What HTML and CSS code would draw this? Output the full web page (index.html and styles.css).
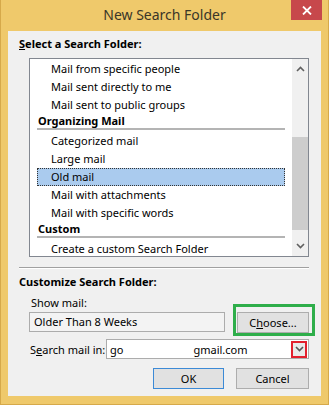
FILE: index.html
```html
<!DOCTYPE html>
<html lang="en">

<head>
    <meta charset="UTF-8">
    <title>New Search Folder</title>
    <link rel="stylesheet" href="styles.css">
</head>

<body>
    <div class="window">
        <header class="titlebar">
            <span></span>
            <h1 class="title">New Search Folder</h1>
            <button class="close" aria-label="Close">
                <svg width="10" height="9" viewBox="0 0 10 9">
                    <path d="M1 0.5 L9 8.5 M9 0.5 L1 8.5" stroke="#fff" stroke-width="1.8" fill="none" />
                </svg>
            </button>
        </header>

        <main class="client">
            <p class="group-label"><u>S</u>elect a Search Folder:</p>

            <div class="listbox">
                <ul class="items">
                    <li class="item">Mail from specific people</li>
                    <li class="item">Mail sent directly to me</li>
                    <li class="item">Mail sent to public groups</li>
                    <li class="header">Organizing Mail</li>
                    <li class="sep"></li>
                    <li class="item">Categorized mail</li>
                    <li class="item">Large mail</li>
                    <li class="item selected">Old mail</li>
                    <li class="item">Mail with attachments</li>
                    <li class="item">Mail with specific words</li>
                    <li class="header">Custom</li>
                    <li class="sep"></li>
                    <li class="item">Create a custom Search Folder</li>
                </ul>
                <div class="scrollbar">
                    <span class="arrow">
                        <svg width="9" height="6" viewBox="0 0 9 6">
                            <path d="M1 5 L4.5 1.5 L8 5" stroke="#606060" stroke-width="1.6" fill="none" />
                        </svg>
                    </span>
                    <span class="track"><span class="thumb"></span></span>
                    <span class="arrow">
                        <svg width="9" height="6" viewBox="0 0 9 6">
                            <path d="M1 1 L4.5 4.5 L8 1" stroke="#606060" stroke-width="1.6" fill="none" />
                        </svg>
                    </span>
                </div>
            </div>

            <hr class="etched">

            <p class="group-label">Customize Search Folder:</p>
            <p class="field-label">Show mail:</p>
            <div class="show-row">
                <div class="textbox">Older Than 8 Weeks</div>
                <div class="mark-green">
                    <button class="btn choose">C<u>h</u>oose...</button>
                </div>
            </div>

            <div class="search-row">
                <label class="search-label">S<u>e</u>arch mail in:</label>
                <div class="combo">
                    <span>go</span>
                    <span class="blank"></span>
                    <span>gmail.com</span>
                    <span class="drop">
                        <svg width="9" height="6" viewBox="0 0 9 6">
                            <path d="M1 1 L4.5 4.5 L8 1" stroke="#555" stroke-width="1.6" fill="none" />
                        </svg>
                    </span>
                </div>
            </div>

            <div class="actions">
                <button class="btn ok">OK</button>
                <button class="btn cancel">Cancel</button>
            </div>
        </main>
    </div>
</body>

</html>
```

FILE: styles.css
```css
* {
    box-sizing: border-box;
}

body {
    margin: 0;
    font-family: "Noto Sans", "Open Sans", sans-serif;
    font-size: 11px;
    color: #000;
    background: #efc96b;
}

.window {
    width: 329px;
    height: 405px;
    background: #efc96b;
    border: 1px solid #d6a94a;
    border-top: none;
    padding: 0 7px 8px 7px;
    display: flex;
    flex-direction: column;
}

.titlebar {
    height: 31px;
    flex-shrink: 0;
    display: grid;
    grid-template-columns: 1fr auto 1fr;
    align-items: start;
}

.title {
    margin: 5px 0 0 0;
    font-size: 14px;
    font-weight: 400;
    line-height: 20px;
    color: #3a3628;
}

.close {
    justify-self: end;
    margin-right: -1px;
    width: 31px;
    height: 20px;
    border: none;
    padding: 0;
    background: #c7484b;
    display: flex;
    align-items: center;
    justify-content: center;
}

.client {
    height: 365px;
    flex-shrink: 0;
    background: #f0f0f0;
    padding: 5px 12px 0 11px;
    display: flex;
    flex-direction: column;
}

.client > * {
    flex-shrink: 0;
}

p {
    margin: 0;
    line-height: 16px;
}

.group-label {
    font-weight: bold;
}

.listbox {
    margin: 6px 0 0 10px;
    height: 199px;
    border: 1px solid #828790;
    background: #fff;
    display: flex;
    overflow: hidden;
}

.items {
    list-style: none;
    margin: 0;
    padding: 1px 0 0 0;
    flex: 1;
}

.item {
    height: 18px;
    line-height: 18px;
    margin: 0 7px;
    padding-left: 13px;
    white-space: nowrap;
    border: 1px solid transparent;
    display: flex;
    align-items: center;
}

.item.selected {
    background: #aacbee;
    border: 1px dotted #333;
}

.header {
    height: 14px;
    line-height: 14px;
    margin: 0 7px;
    padding-left: 1px;
    font-weight: bold;
}

.sep {
    height: 2px;
    margin: 0 7px 2px 7px;
    background: #b4b4b4;
}

.scrollbar {
    width: 16px;
    flex-shrink: 0;
    background: #f0f0f0;
    display: flex;
    flex-direction: column;
}

.arrow {
    height: 20px;
    display: flex;
    align-items: center;
    justify-content: center;
}

.track {
    flex: 1;
    padding-top: 58px;
}

.thumb {
    display: block;
    height: 93px;
    background: #cdcdcd;
}

.etched {
    margin: 10px 0 0 0;
    border: none;
    border-top: 1px solid #a0a0a0;
    border-bottom: 1px solid #fff;
    height: 0;
}

.etched + .group-label {
    margin-top: 5px;
}

.field-label {
    margin: 5px 0 0 12px;
}

.show-row {
    margin: 1px 0 0 10px;
    display: flex;
    justify-content: space-between;
    align-items: flex-start;
}

.textbox {
    width: 196px;
    height: 20px;
    border: 1px solid #acacac;
    background: #f3f3f3;
    padding-left: 4px;
    line-height: 18px;
}

.btn {
    font-family: inherit;
    font-size: 11px;
    color: #000;
    height: 21px;
    padding: 0;
    background: #e1e1e1;
    border: 1px solid #adadad;
}

.mark-green {
    position: relative;
}

.mark-green::after {
    content: "";
    position: absolute;
    top: -8px;
    left: -4px;
    right: -6px;
    bottom: -3px;
    border: 3px solid #2eae4a;
}

.choose {
    width: 72px;
}

.search-row {
    margin: 6px 0 0 11px;
    display: flex;
    align-items: center;
    justify-content: space-between;
}

.search-label {
    white-space: nowrap;
}

.combo {
    width: 203px;
    height: 20px;
    border: 1px solid #acacac;
    background: #fff;
    padding-left: 3px;
    display: flex;
    align-items: center;
    white-space: nowrap;
}

.blank {
    width: 70px;
}

.drop {
    margin-left: auto;
    margin-right: 1px;
    width: 16px;
    height: 17px;
    border: 2px solid #e21f2d;
    background: #e9e9e9;
    display: flex;
    align-items: center;
    justify-content: center;
}

.actions {
    margin-top: 9px;
    display: flex;
    justify-content: flex-end;
    gap: 12px;
}

.ok {
    width: 71px;
    border-color: #3c8ad6;
}

.cancel {
    width: 73px;
}
```
